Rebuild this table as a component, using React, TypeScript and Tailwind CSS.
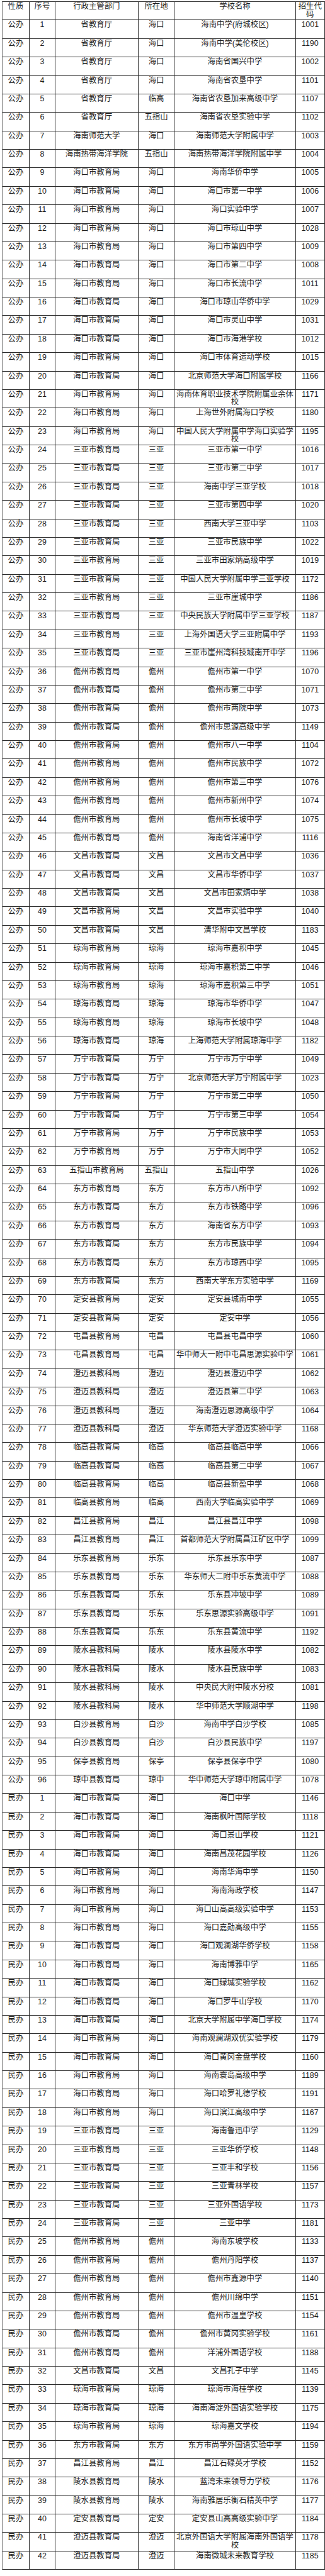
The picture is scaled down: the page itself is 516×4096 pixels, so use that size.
import React from "react";

const PUB = `省教育厅,海口,海南中学(府城校区),1001
省教育厅,海口,海南中学(美伦校区),1190
省教育厅,海口,海南省国兴中学,1002
省教育厅,海口,海南省农垦中学,1101
省教育厅,临高,海南省农垦加来高级中学,1107
省教育厅,五指山,海南省农垦实验中学,1102
海南师范大学,海口,海南师范大学附属中学,1003
海南热带海洋学院,五指山,海南热带海洋学院附属中学,1004
海口市教育局,海口,海南华侨中学,1005
海口市教育局,海口,海口市第一中学,1006
海口市教育局,海口,海口实验中学,1007
海口市教育局,海口,海口市琼山中学,1028
海口市教育局,海口,海口市第四中学,1009
海口市教育局,海口,海口市第二中学,1008
海口市教育局,海口,海口市长流中学,1011
海口市教育局,海口,海口市琼山华侨中学,1029
海口市教育局,海口,海口市灵山中学,1031
海口市教育局,海口,海口市海港学校,1012
海口市教育局,海口,海口市体育运动学校,1015
海口市教育局,海口,北京师范大学海口附属学校,1166
海口市教育局,海口,海南体育职业技术学院附属业余体校,1171
海口市教育局,海口,上海世外附属海口学校,1180
海口市教育局,海口,中国人民大学附属中学海口实验学校,1195
三亚市教育局,三亚,三亚市第一中学,1016
三亚市教育局,三亚,三亚市第二中学,1017
三亚市教育局,三亚,海南中学三亚学校,1018
三亚市教育局,三亚,三亚市第四中学,1020
三亚市教育局,三亚,西南大学三亚中学,1103
三亚市教育局,三亚,三亚市民族中学,1022
三亚市教育局,三亚,三亚市田家炳高级中学,1019
三亚市教育局,三亚,中国人民大学附属中学三亚学校,1172
三亚市教育局,三亚,三亚市崖城中学,1186
三亚市教育局,三亚,中央民族大学附属中学三亚学校,1187
三亚市教育局,三亚,上海外国语大学三亚附属中学,1193
三亚市教育局,三亚,三亚市崖州湾科技城南开中学,1196
儋州市教育局,儋州,儋州市第一中学,1070
儋州市教育局,儋州,儋州市第二中学,1071
儋州市教育局,儋州,儋州市两院中学,1073
儋州市教育局,儋州,儋州市思源高级中学,1149
儋州市教育局,儋州,儋州市八一中学,1104
儋州市教育局,儋州,儋州市民族中学,1072
儋州市教育局,儋州,儋州市第三中学,1076
儋州市教育局,儋州,儋州市新州中学,1074
儋州市教育局,儋州,儋州市长坡中学,1075
儋州市教育局,儋州,海南省洋浦中学,1116
文昌市教育局,文昌,文昌市文昌中学,1036
文昌市教育局,文昌,文昌市华侨中学,1037
文昌市教育局,文昌,文昌市田家炳中学,1038
文昌市教育局,文昌,文昌市实验中学,1040
文昌市教育局,文昌,清华附中文昌学校,1183
琼海市教育局,琼海,琼海市嘉积中学,1045
琼海市教育局,琼海,琼海市嘉积第二中学,1046
琼海市教育局,琼海,琼海市嘉积第三中学,1051
琼海市教育局,琼海,琼海市华侨中学,1047
琼海市教育局,琼海,琼海市长坡中学,1048
琼海市教育局,琼海,上海师范大学附属琼海中学,1182
万宁市教育局,万宁,万宁市万宁中学,1049
万宁市教育局,万宁,北京师范大学万宁附属中学,1023
万宁市教育局,万宁,万宁市第二中学,1050
万宁市教育局,万宁,万宁市第三中学,1054
万宁市教育局,万宁,万宁市民族中学,1053
万宁市教育局,万宁,万宁市大同中学,1052
五指山市教育局,五指山,五指山中学,1026
东方市教育局,东方,东方市八所中学,1092
东方市教育局,东方,东方市铁路中学,1096
东方市教育局,东方,海南省东方中学,1093
东方市教育局,东方,东方市民族中学,1094
东方市教育局,东方,东方市琼西中学,1095
东方市教育局,东方,西南大学东方实验中学,1169
定安县教育局,定安,定安县城南中学,1055
定安县教育局,定安,定安中学,1056
屯昌县教育局,屯昌,屯昌县屯昌中学,1060
屯昌县教育局,屯昌,华中师大一附中屯昌思源实验中学,1061
澄迈县教科局,澄迈,澄迈县澄迈中学,1062
澄迈县教科局,澄迈,澄迈县第二中学,1063
澄迈县教科局,澄迈,海南澄迈思源高级中学,1064
澄迈县教科局,澄迈,华东师范大学澄迈实验中学,1168
临高县教育局,临高,临高县临高中学,1066
临高县教育局,临高,临高县第二中学,1067
临高县教育局,临高,临高县新盈中学,1068
临高县教育局,临高,西南大学临高实验中学,1069
昌江县教育局,昌江,昌江县昌江中学,1098
昌江县教育局,昌江,首都师范大学附属昌江矿区中学,1099
乐东县教育局,乐东,乐东县乐东中学,1087
乐东县教育局,乐东,华东师大二附中乐东黄流中学,1088
乐东县教育局,乐东,乐东县冲坡中学,1089
乐东县教育局,乐东,乐东思源实验高级中学,1091
乐东县教育局,乐东,乐东县黄流中学,1192
陵水县教科局,陵水,陵水县陵水中学,1082
陵水县教科局,陵水,陵水县民族中学,1083
陵水县教科局,陵水,中央民大附中陵水分校,1081
陵水县教科局,陵水,华中师范大学顺湖中学,1198
白沙县教育局,白沙,海南中学白沙学校,1085
白沙县教育局,白沙,白沙县民族中学,1197
保亭县教育局,保亭,保亭县保亭中学,1080
琼中县教育局,琼中,华中师范大学琼中附属中学,1078`;

const PRI = `海口市教育局,海口,海口中学,1146
海口市教育局,海口,海南枫叶国际学校,1118
海口市教育局,海口,海口景山学校,1121
海口市教育局,海口,海南昌茂花园学校,1126
海口市教育局,海口,海南华海中学,1150
海口市教育局,海口,海南海政学校,1147
海口市教育局,海口,海口山高高级实验中学,1153
海口市教育局,海口,海口嘉勋高级中学,1155
海口市教育局,海口,海口观澜湖华侨学校,1158
海口市教育局,海口,海南博雅中学,1165
海口市教育局,海口,海口绿城实验学校,1162
海口市教育局,海口,海口罗牛山学校,1170
海口市教育局,海口,北京大学附属中学海口学校,1174
海口市教育局,海口,海南观澜湖双优实验学校,1179
海口市教育局,海口,海口黄冈金盘学校,1160
海口市教育局,海口,海南寰岛高级中学,1189
海口市教育局,海口,海口哈罗礼德学校,1191
海口市教育局,海口,海口滨江高级中学,1167
三亚市教育局,三亚,海南鲁迅中学,1129
三亚市教育局,三亚,三亚华侨学校,1148
三亚市教育局,三亚,三亚丰和学校,1156
三亚市教育局,三亚,三亚青林学校,1157
三亚市教育局,三亚,三亚外国语学校,1173
三亚市教育局,三亚,三亚中学,1181
儋州市教育局,儋州,海南东坡学校,1133
儋州市教育局,儋州,儋州丹阳学校,1137
儋州市教育局,儋州,儋州市鑫源中学,1140
儋州市教育局,儋州,儋州川绵中学,1151
儋州市教育局,儋州,儋州市温皇学校,1154
儋州市教育局,儋州,儋州市黄冈实验学校,1161
儋州市教育局,儋州,洋浦外国语学校,1188
文昌市教育局,文昌,文昌孔子中学,1145
琼海市教育局,琼海,琼海市海桂学校,1139
琼海市教育局,琼海,海南海淀外国语实验学校,1175
琼海市教育局,琼海,琼海嘉文学校,1194
东方市教育局,东方,东方市尚学外国语实验中学,1159
昌江县教育局,昌江,昌江石碌英才学校,1152
陵水县教育局,陵水,蓝湾未来领导力学校,1176
陵水县教育局,陵水,海南雅居乐衡石精英中学,1177
定安县教育局,定安,定安县山高高级实验中学,1184
澄迈县教育局,澄迈,北京外国语大学附属海南外国语学校,1178
澄迈县教育局,澄迈,海南微城未来教育学校,1185`;

type Row = string[];

const rows: Row[] = [
  ...PUB.split("\n").map((l, i) => ["公办", String(i + 1), ...l.split(",")]),
  ...PRI.split("\n").map((l, i) => ["民办", String(i + 1), ...l.split(",")]),
];

const header = ["性质", "序号", "行政主管部门", "所在地", "学校名称", "招生代码"];

const cell =
  "border-r border-b border-[#2a2a2a] text-center overflow-hidden pt-[1px] px-[1px] text-[12.4px] leading-[12.6px] text-[#1c1c1c] break-all";

export default function App() {
  return (
    <div className="min-h-[4096px] w-[516px] bg-white font-['Liberation_Sans','Noto_Sans_CJK_SC',sans-serif]">
      <div className="pt-[2px] pl-[2.6px]">
        <div className="grid w-fit grid-cols-[43.7px_40.3px_132.5px_56.9px_193px_45.6px] auto-rows-[29.39px] border-l border-t border-l-[#6a6a6a] border-t-[#3a3a3a]">
          {header.map((h, i) => (
            <div key={"h" + i} className={cell}>
              {h}
            </div>
          ))}
          {rows.map((r, ri) =>
            r.map((c, ci) => (
              <div key={ri + "-" + ci} className={cell}>
                {c}
              </div>
            ))
          )}
        </div>
      </div>
    </div>
  );
}
